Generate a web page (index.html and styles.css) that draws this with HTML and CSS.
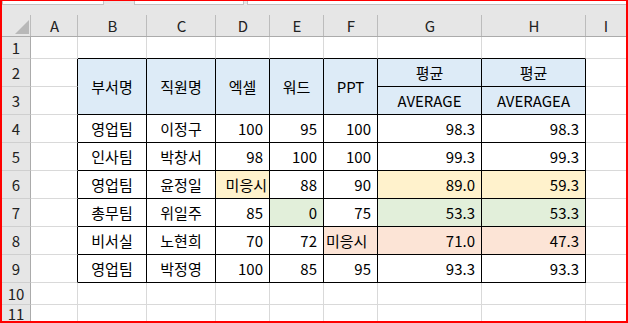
FILE: index.html
```html
<!DOCTYPE html>
<html lang="ko">
<head>
<meta charset="utf-8">
<title>Sheet</title>
<link rel="stylesheet" href="styles.css">
</head>
<body>
<div class="frame">
  <div class="bar">
    <div class="box b1"></div>
    <div class="box b2"></div>
    <div class="box b3"></div>
  </div>
  <div class="sheet">
    <div class="h corner"><svg width="14" height="14" viewBox="0 0 14 14"><polygon points="0,14 14,14 14,0" fill="#b8b8b8"/></svg></div>
    <div class="h">A</div><div class="h">B</div><div class="h">C</div><div class="h">D</div><div class="h">E</div><div class="h">F</div><div class="h">G</div><div class="h">H</div><div class="h last">I</div>

    <div class="r">1</div>
    <div class="c"></div><div class="c tt"></div><div class="c tt"></div><div class="c tt"></div><div class="c tt"></div><div class="c tt"></div><div class="c tt"></div><div class="c tt"></div><div class="c e"></div>

    <div class="r">2</div>
    <div class="c tl"></div>
    <div class="c t hd span">부서명</div>
    <div class="c t hd span">직원명</div>
    <div class="c t hd span">엑셀</div>
    <div class="c t hd span">워드</div>
    <div class="c t hd span">PPT</div>
    <div class="c t hd">평균</div>
    <div class="c t hd">평균</div>
    <div class="c e"></div>

    <div class="r">3</div>
    <div class="c tl"></div>
    <div class="c t hd">AVERAGE</div>
    <div class="c t hd">AVERAGEA</div>
    <div class="c e"></div>

    <div class="r">4</div>
    <div class="c tl"></div>
    <div class="c t ct">영업팀</div><div class="c t ct">이정구</div>
    <div class="c t n">100</div><div class="c t n">95</div><div class="c t n">100</div>
    <div class="c t n">98.3</div><div class="c t n">98.3</div>
    <div class="c e"></div>

    <div class="r">5</div>
    <div class="c tl"></div>
    <div class="c t ct">인사팀</div><div class="c t ct">박창서</div>
    <div class="c t n">98</div><div class="c t n">100</div><div class="c t n">100</div>
    <div class="c t n">99.3</div><div class="c t n">99.3</div>
    <div class="c e"></div>

    <div class="r">6</div>
    <div class="c tl"></div>
    <div class="c t ct">영업팀</div><div class="c t ct">윤정일</div>
    <div class="c t tr y">미응시</div><div class="c t n">88</div><div class="c t n">90</div>
    <div class="c t n y">89.0</div><div class="c t n y">59.3</div>
    <div class="c e"></div>

    <div class="r">7</div>
    <div class="c tl"></div>
    <div class="c t ct">총무팀</div><div class="c t ct">위일주</div>
    <div class="c t n">85</div><div class="c t n g">0</div><div class="c t n">75</div>
    <div class="c t n g">53.3</div><div class="c t n g">53.3</div>
    <div class="c e"></div>

    <div class="r">8</div>
    <div class="c tl"></div>
    <div class="c t ct">비서실</div><div class="c t ct">노현희</div>
    <div class="c t n">70</div><div class="c t n">72</div><div class="c t tx p">미응시</div>
    <div class="c t n p">71.0</div><div class="c t n p">47.3</div>
    <div class="c e"></div>

    <div class="r">9</div>
    <div class="c tl"></div>
    <div class="c t ct">영업팀</div><div class="c t ct">박정영</div>
    <div class="c t n">100</div><div class="c t n">85</div><div class="c t n">95</div>
    <div class="c t n">93.3</div><div class="c t n">93.3</div>
    <div class="c e"></div>

    <div class="r">10</div>
    <div class="c"></div><div class="c"></div><div class="c"></div><div class="c"></div><div class="c"></div><div class="c"></div><div class="c"></div><div class="c"></div><div class="c e"></div>

    <div class="r nb">11</div>
    <div class="c nb"></div><div class="c nb"></div><div class="c nb"></div><div class="c nb"></div><div class="c nb"></div><div class="c nb"></div><div class="c nb"></div><div class="c nb"></div><div class="c e nb"></div>
  </div>
</div>
</body>
</html>
```

FILE: styles.css
```css
* { box-sizing: border-box; margin: 0; padding: 0; }

html, body { background: #fff; }

body {
  width: 628px;
  height: 323px;
  overflow: hidden;
  font-family: "Noto Sans CJK KR", "Noto Sans", sans-serif;
  font-size: 15px;
  color: #000;
}

.frame {
  width: 628px;
  height: 323px;
  border: 2px solid #ff0000;
  border-top-width: 1px;
  display: flex;
  flex-direction: column;
  overflow: hidden;
}

.bar {
  height: 4px;
  background: #e6e6e6;
  display: flex;
}

.box {
  background: #fff;
  border: 1px solid #c3c3c3;
  border-top: none;
}

.b1 { width: 102px; }
.b2 { width: 110px; margin-left: 30px; }
.b3 { flex: 1; margin-left: 3px; border-right: none; }

.sheet {
  display: grid;
  grid-template-columns: 29px 47px 69px 69px 54px 54px 54px 104px 104px 40px;
  grid-template-rows: 32px 22px repeat(8, 28px) 22px 16px;
}

.h {
  background: linear-gradient(#bcbcbc, #bcbcbc) right bottom / 1px 21px no-repeat, #e6e6e6;
  border-bottom: 1px solid #ababab;
  display: flex;
  align-items: center;
  justify-content: center;
  padding-top: 10px;
  color: #222;
}

.h.last { background: #e6e6e6; }

.corner {
  align-items: flex-end;
  justify-content: flex-end;
  padding: 0 2px 2px 0;
}

.corner svg { display: block; }

.r {
  background: #e6e6e6;
  border-right: 1px solid #ababab;
  border-bottom: 1px solid #cfcfcf;
  display: flex;
  align-items: center;
  justify-content: center;
  color: #222;
}

.c {
  border-right: 1px solid #d9d9d9;
  border-bottom: 1px solid #d9d9d9;
  display: flex;
  align-items: center;
  white-space: nowrap;
  overflow: hidden;
}

.c.e { border-right: none; }
.nb { border-bottom: none; }

.c.tl { border-right-color: #000; }
.c.tt { border-bottom-color: #000; }
.c.t { border-right-color: #000; border-bottom-color: #000; }

.hd { background: #ddebf7; justify-content: center; }
.span { grid-row: span 2; }

.ct { justify-content: center; }
.n { justify-content: flex-end; padding-right: 6px; }
.tr { justify-content: flex-end; padding-right: 2px; }
.tx { justify-content: flex-start; padding-left: 2px; }

.y { background: #fff2cc; }
.g { background: #e2efda; }
.p { background: #fce4d6; }
```
